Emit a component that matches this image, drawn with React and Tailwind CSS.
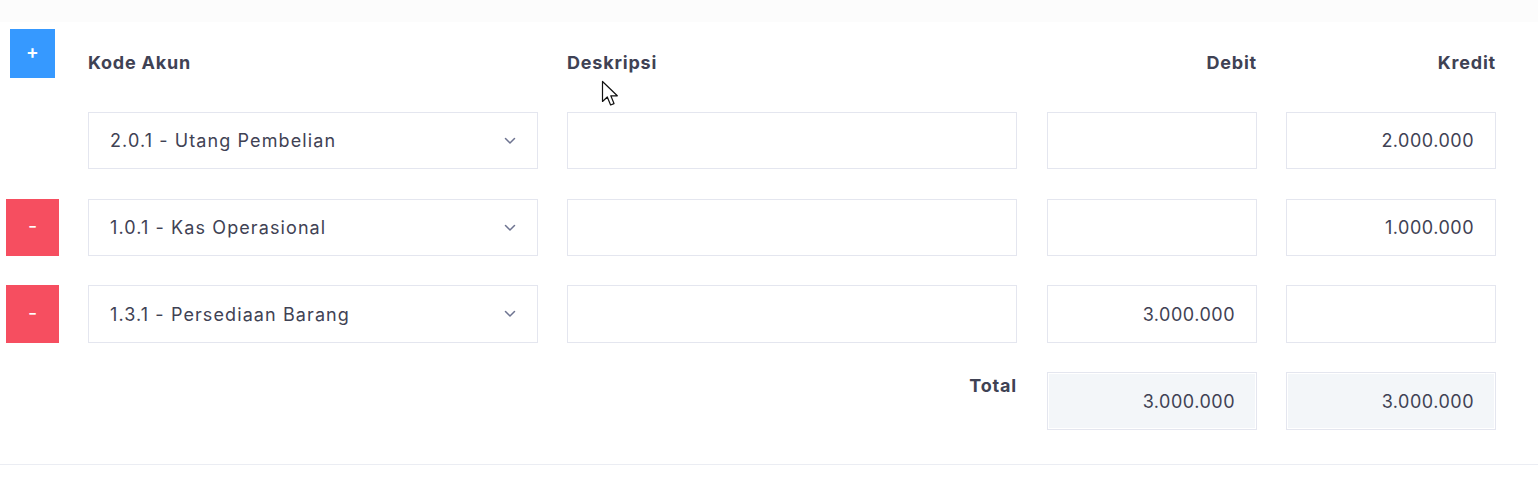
import React from 'react';

const rows = [
  { id: 1, akun: '2.0.1 - Utang Pembelian', desc: '', debit: '', kredit: '2.000.000', removable: false },
  { id: 2, akun: '1.0.1 - Kas Operasional', desc: '', debit: '', kredit: '1.000.000', removable: true },
  { id: 3, akun: '1.3.1 - Persediaan Barang', desc: '', debit: '3.000.000', kredit: '', removable: true },
];

const Chevron = () => (
  <svg width="12" height="8" viewBox="0 0 12 8" fill="none" className="shrink-0">
    <path d="M1.5 1.5L6 6L10.5 1.5" stroke="#6e7491" strokeWidth="1.5" strokeLinecap="round" strokeLinejoin="round" />
  </svg>
);

// mouse pointer captured in the screenshot
const Cursor = () => (
  <svg width="20" height="28" viewBox="0 0 20 28" className="absolute left-[601px] top-[80px] pointer-events-none">
    <path d="M1.5 1.5V21.5L6.3 17L9.6 25L13 23.6L9.8 15.8H16.3Z" fill="#fff" stroke="#111" strokeWidth="1.2" strokeLinejoin="round" />
  </svg>
);

const Field = ({ children, align = 'left', muted = false, tall = false }) => (
  <div
    className={`${tall ? 'h-[58px]' : 'h-[57px]'} border border-[#e4e6ef] flex items-center px-[21px] ${
      align === 'right' ? 'justify-end' : 'justify-start'
    } ${muted ? 'bg-[#f3f6f9] shadow-[inset_0_0_0_1px_#fff]' : 'bg-white'}`}
  >
    {children}
  </div>
);

const Label = ({ children, right = false }) => (
  <div className={`pt-[22px] text-[18px] font-bold text-[#3f4254] leading-[24px] tracking-[0.8px] ${right ? 'text-right' : ''}`}>
    {children}
  </div>
);

export default function App() {
  return (
    <div className="relative bg-white w-full h-[486px] text-[#3f4254] font-['Inter','Noto_Sans',sans-serif]">
      <div className="h-[22px] bg-[#fcfcfc]" />

      <div className="grid grid-cols-[53px_450px_451px_210px_210px] gap-x-[29px] pl-[6px] pt-[7px]">
        {/* Header */}
        <div className="h-[49px] flex items-start justify-center">
          <button className="w-[45px] h-[49px] bg-[#3699ff] text-white text-[19px] font-semibold leading-none flex items-center justify-center pb-[4px]">
            +
          </button>
        </div>
        <Label>Kode Akun</Label>
        <Label>Deskripsi</Label>
        <Label right>Debit</Label>
        <Label right>Kredit</Label>

        {rows.map((r, i) => {
          const top = i === 0 ? 'mt-[34px]' : i === 1 ? 'mt-[30px]' : 'mt-[29px]';
          const tall = i === 2;
          return (
            <React.Fragment key={r.id}>
              <div className={top}>
                {r.removable && (
                  <button className={`w-[53px] ${tall ? 'h-[58px]' : 'h-[57px]'} bg-[#f64e60] text-white text-[20px] leading-none flex items-center justify-center pb-[3px]`}>
                    -
                  </button>
                )}
              </div>
              <div className={top}>
                <Field tall={tall}>
                  <span className="flex-1 text-[18px] tracking-[1.1px]">{r.akun}</span>
                  <Chevron />
                </Field>
              </div>
              <div className={`mr-[1px] ${top}`}>
                <Field tall={tall}>{r.desc}</Field>
              </div>
              <div className={top}>
                <Field align="right" tall={tall}><span className="text-[18px] tracking-[0.5px]">{r.debit}</span></Field>
              </div>
              <div className={top}>
                <Field align="right" tall={tall}><span className="text-[18px] tracking-[0.5px]">{r.kredit}</span></Field>
              </div>
            </React.Fragment>
          );
        })}

        {/* Total */}
        <div className="mt-[29px]" />
        <div className="mt-[29px]" />
        <div className="mt-[29px] mr-[1px] text-right text-[18px] font-bold leading-[24px] tracking-[0.8px] pt-[2px]">Total</div>
        <div className="mt-[29px]">
          <Field align="right" muted tall><span className="text-[18px] tracking-[0.5px]">3.000.000</span></Field>
        </div>
        <div className="mt-[29px]">
          <Field align="right" muted tall><span className="text-[18px] tracking-[0.5px]">3.000.000</span></Field>
        </div>
      </div>

      <div className="mt-[34px] border-t border-[#ebedf3]" />
      <Cursor />
    </div>
  );
}
